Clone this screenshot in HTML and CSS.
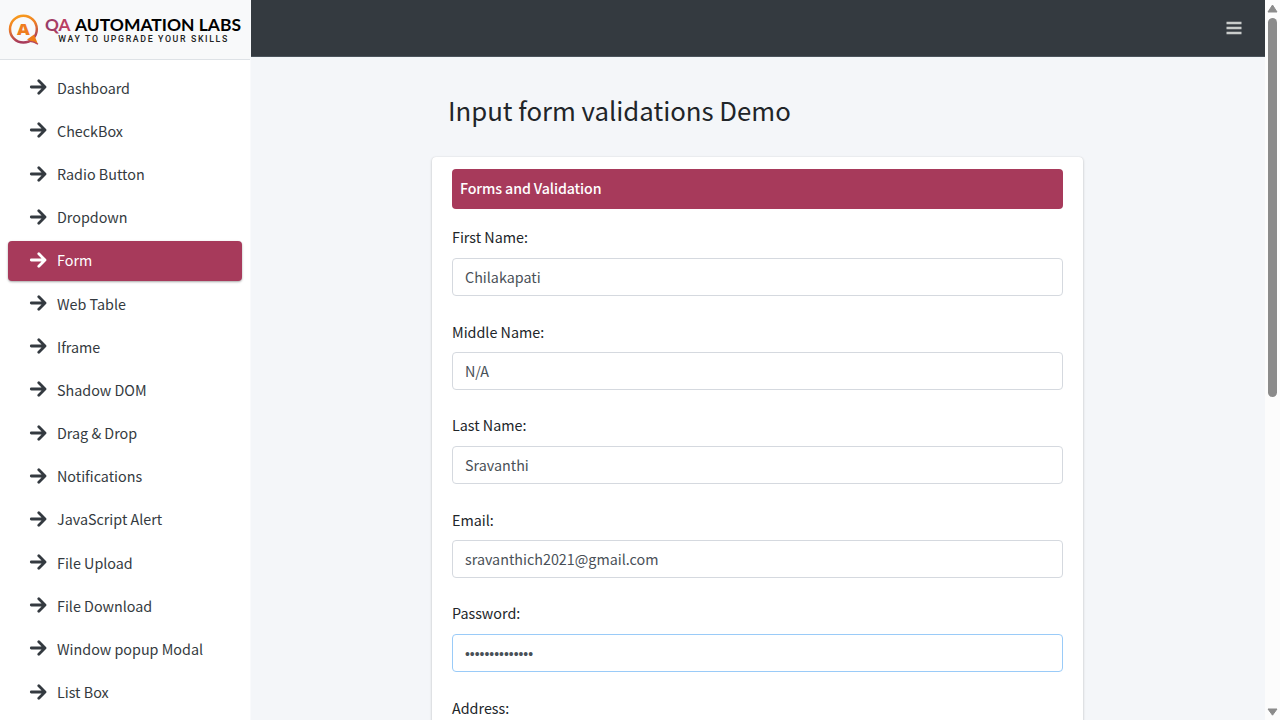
FILE: index.html
```html
<!DOCTYPE html>
<html lang="en">
<head>
<meta charset="utf-8">
<title>QA Automation Labs</title>
<link rel="stylesheet" href="styles.css">
</head>
<body>
<svg class="defs" width="0" height="0"><symbol id="arrow" viewBox="0 0 18 16"><path d="M2.3 8H15.5M9.8 1.8L16 8L9.8 14.2" fill="none" stroke="currentColor" stroke-width="2.8" stroke-linecap="round" stroke-linejoin="round"/></symbol></svg>
<div class="app">
  <aside class="sidebar">
    <a class="brand">
      <svg width="250" height="59" viewBox="0 0 250 59">
        <defs>
          <linearGradient id="ring" x1="0" y1="0" x2="0.25" y2="1"><stop offset="0" stop-color="#f9a01b"/><stop offset=".45" stop-color="#ee7d25"/><stop offset="1" stop-color="#a73a5b"/></linearGradient>
          <linearGradient id="qa" x1="0" y1="0" x2="1" y2="0"><stop offset="0" stop-color="#943c68"/><stop offset="1" stop-color="#c63d5e"/></linearGradient>
        </defs>
        <circle cx="23.4" cy="29.2" r="13.4" fill="none" stroke="url(#ring)" stroke-width="2.5"/>
        <path d="M27 39.5L34 34.5L38 44.2Z" fill="#ee7d17"/>
        <path d="M26 42Q32 40 38 44.2" fill="none" stroke="#b5445c" stroke-width="1.4"/>
        <text class="mark" x="17" y="34.9" textLength="12.8" lengthAdjust="spacingAndGlyphs">A</text>
        <text class="name" x="45" y="30.6" fill="url(#qa)" textLength="25.5" lengthAdjust="spacingAndGlyphs">QA</text>
        <text class="name" x="75" y="30.6" textLength="166" lengthAdjust="spacingAndGlyphs">AUTOMATION LABS</text>
        <text class="tag" x="58.3" y="42.3" textLength="169">WAY TO UPGRADE YOUR SKILLS</text>
      </svg>
    </a>
    <nav class="menu">
      <a class="item"><svg><use href="#arrow"/></svg><span>Dashboard</span></a>
      <a class="item"><svg><use href="#arrow"/></svg><span>CheckBox</span></a>
      <a class="item"><svg><use href="#arrow"/></svg><span>Radio Button</span></a>
      <a class="item"><svg><use href="#arrow"/></svg><span>Dropdown</span></a>
      <a class="item active"><svg><use href="#arrow"/></svg><span>Form</span></a>
      <a class="item"><svg><use href="#arrow"/></svg><span>Web Table</span></a>
      <a class="item"><svg><use href="#arrow"/></svg><span>Iframe</span></a>
      <a class="item"><svg><use href="#arrow"/></svg><span>Shadow DOM</span></a>
      <a class="item"><svg><use href="#arrow"/></svg><span>Drag &amp; Drop</span></a>
      <a class="item"><svg><use href="#arrow"/></svg><span>Notifications</span></a>
      <a class="item"><svg><use href="#arrow"/></svg><span>JavaScript Alert</span></a>
      <a class="item"><svg><use href="#arrow"/></svg><span>File Upload</span></a>
      <a class="item"><svg><use href="#arrow"/></svg><span>File Download</span></a>
      <a class="item"><svg><use href="#arrow"/></svg><span>Window popup Modal</span></a>
      <a class="item"><svg><use href="#arrow"/></svg><span>List Box</span></a>
    </nav>
  </aside>
  <div class="content">
    <header class="topbar">
      <svg width="16" height="14" viewBox="0 0 16 14"><path d="M.5 2H15.5M.5 7H15.5M.5 12H15.5" stroke="#c9cccb" stroke-width="2.6"/></svg>
    </header>
    <main class="main">
      <h1 class="title">Input form validations Demo</h1>
      <section class="card">
        <h2 class="card-title">Forms and Validation</h2>
        <div class="field"><label class="label">First Name:</label><input class="input" value="Chilakapati"></div>
        <div class="field even"><label class="label">Middle Name:</label><input class="input" value="N/A"></div>
        <div class="field"><label class="label">Last Name:</label><input class="input" value="Sravanthi"></div>
        <div class="field even"><label class="label">Email:</label><input class="input" value="sravanthich2021@gmail.com"></div>
        <div class="field"><label class="label">Password:</label><div class="input focused"><span class="dots">••••••••••••••</span></div></div>
        <div class="field even"><label class="label">Address:</label><input class="input"></div>
      </section>
    </main>
  </div>
  <div class="scrollbar">
    <svg width="15" height="17" viewBox="0 0 15 17"><path d="M7.5 5L12 12H3Z" fill="#8b8b8b" stroke="#8b8b8b" stroke-linejoin="round"/></svg>
    <div class="thumb"></div>
    <svg class="down" width="15" height="17" viewBox="0 0 15 17"><path d="M7.5 12.2L12 6H3Z" fill="#8b8b8b" stroke="#8b8b8b" stroke-linejoin="round"/></svg>
  </div>
</div>
</body>
</html>
```
FILE: styles.css
```css
* { box-sizing: border-box; }
body { margin: 0; height: 720px; overflow: hidden; font-family: "Noto Sans CJK SC", "Noto Sans", sans-serif; font-size: 14.33px; color: #212529; background: #f4f6f9; }
.defs { position: absolute; }
.app { display: flex; height: 720px; overflow: hidden; }
.sidebar { width: 251px; background: #fff; flex: none; border-right: 1px solid #f9fafc; }
.brand { display: block; height: 60px; background: #f8f9fa; border-bottom: 1px solid #dee2e6; }
.brand svg { display: block; }
.mark { font: 800 15.5px "Open Sans", sans-serif; fill: #ef7d1e; }
.name { font: 700 16.2px Lato, sans-serif; }
.tag { font: 500 8.8px Roboto, sans-serif; fill: #222; }
.menu { display: flex; flex-direction: column; gap: 2.82px; padding: 8.05px 8px 0; }
.item { display: flex; align-items: center; flex: none; width: 234.4px; height: 40.36px; padding-left: 21px; border-radius: 4px; color: #343a40; }
.item svg { width: 18px; height: 16px; margin-right: 10px; margin-bottom: 2px; }
.item span { line-height: 20px; padding-bottom: 1px; }
.item.active { background: #a73a5b; color: #fff; box-shadow: 0 1px 3px rgba(0,0,0,.12), 0 1px 2px rgba(0,0,0,.24); }
.content { flex: 1; min-width: 0; }
.topbar { height: 57px; background: #343a40; border-bottom: 1px solid #4b545c; display: flex; justify-content: flex-end; align-items: center; padding-right: 23px; }
.main { width: 651px; margin-left: 181px; }
.title { margin: 0; padding: 35px 0 0 16px; height: 100px; font-size: 25.75px; line-height: 36px; font-weight: 400; }
.card { height: 700px; background: #fff; border-radius: 4px; box-shadow: 0 0 1px rgba(0,0,0,.125), 0 1px 3px rgba(0,0,0,.2); padding: 12px 20px; }
.card-title { margin: 0 0 17px; height: 40px; padding-left: 8px; line-height: 38px; font-size: 14.2px; letter-spacing: -.1px; font-weight: 500; color: #fff; background: #a73a5b; border-radius: 4px; }
.field { height: 94px; }
.label { display: block; height: 32px; line-height: 21px; }
.even .label { line-height: 23px; }
.input { display: flex; align-items: center; width: 100%; height: 38px; padding: 0 12px 2px; border: 1px solid #d5d9df; border-radius: 4px; background: #fff; color: #495057; font: inherit; outline: 0; }
.even .input { padding-bottom: 1px; }
.input.focused { border-color: #9acbf8; }
.dots { font: 13.9px "Liberation Sans", sans-serif; padding-top: 3px; }
.scrollbar { width: 15px; background: #fcfcfc; display: flex; flex-direction: column; align-items: center; flex: none; }
.thumb { width: 9px; height: 379px; margin-top: 1px; border-radius: 5px; background: #8b8b8b; }
.down { margin-top: auto; }
```
